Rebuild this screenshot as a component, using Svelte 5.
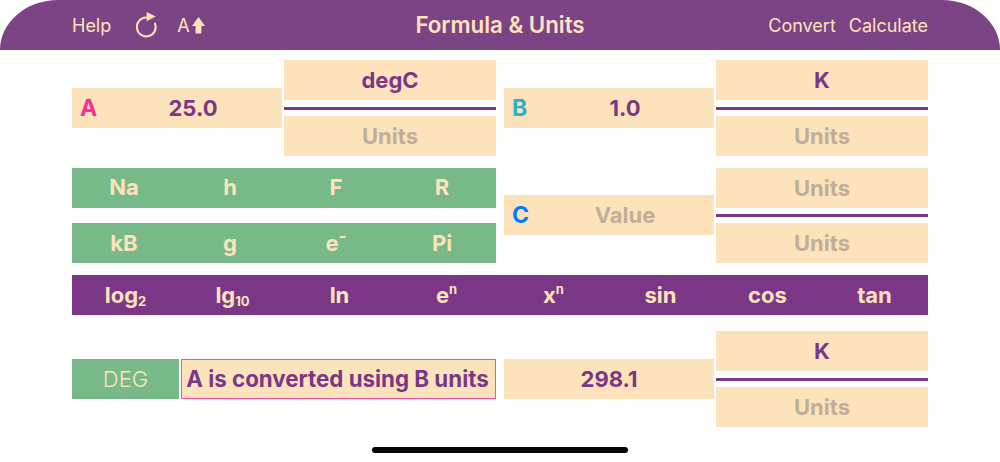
<script>
  const constants = [
    [{ label: "Na" }, { label: "h" }, { label: "F" }, { label: "R" }],
    [{ label: "kB" }, { label: "g" }, { label: "e", sup: "-", minus: true }, { label: "Pi" }],
  ];

  const functions = [
    { label: "log", sub: "2" },
    { label: "lg", sub: "10" },
    { label: "ln" },
    { label: "e", sup: "n" },
    { label: "x", sup: "n" },
    { label: "sin" },
    { label: "cos" },
    { label: "tan" },
  ];
</script>

{#snippet units(top, bottom)}
  <div class="units">
    <div class="cell" class:empty={!top}>{top || "Units"}</div>
    <div class="rule"></div>
    <div class="cell" class:empty={!bottom}>{bottom || "Units"}</div>
  </div>
{/snippet}

{#snippet key(item)}
  <span class="key">
    {item.label}{#if item.sub}<sub>{item.sub}</sub>{/if}{#if item.sup}<sup class:minus={item.minus}>{item.sup}</sup>{/if}
  </span>
{/snippet}

<div class="screen">
  <header class="nav">
    <div class="nav-left">
      <span>Help</span>
      <svg class="redo" width="24" height="28" viewBox="0 0 24 28" aria-hidden="true">
        <path d="M12 6.6 A9.4 9.4 0 1 0 21 12.5" fill="none" stroke="currentColor" stroke-width="2" stroke-linecap="round" />
        <path d="M12.6 1 L21.6 5.6 L12.6 10.2 Z" fill="currentColor" />
      </svg>
      <span class="font-up">
        A
        <svg width="13" height="17" viewBox="0 0 13 17" aria-hidden="true">
          <path d="M6.5 0 L13 9 H9.4 V16.5 H3.6 V9 H0 Z" fill="currentColor" />
        </svg>
      </span>
    </div>
    <h1>Formula &amp; Units</h1>
    <div class="nav-right">
      <span>Convert</span>
      <span>Calculate</span>
    </div>
  </header>

  <main class="content">
    <section class="pair">
      <div class="fraction">
        <div class="value tagged"><span class="tag a">A</span>25.0</div>
        {@render units("degC", "")}
      </div>
      <div class="fraction">
        <div class="value tagged"><span class="tag b">B</span>1.0</div>
        {@render units("K", "")}
      </div>
    </section>

    <section class="pair tight">
      <div class="constants">
        {#each constants as row}
          <div class="keys">
            {#each row as item}
              {@render key(item)}
            {/each}
          </div>
        {/each}
      </div>
      <div class="fraction">
        <div class="value tagged empty"><span class="tag c">C</span>Value</div>
        {@render units("", "")}
      </div>
    </section>

    <section class="functions">
      {#each functions as item}
        {@render key(item)}
      {/each}
    </section>

    <section class="pair result">
      <div class="mode">
        <div class="deg">DEG</div>
        <div class="message">A is converted using B units</div>
      </div>
      <div class="fraction">
        <div class="value">298.1</div>
        {@render units("K", "")}
      </div>
    </section>
  </main>

  <div class="home-bar"></div>
</div>

<style>
  :global(body) {
    background: #fff;
  }

  .screen {
    position: relative;
    width: 1000px;
    height: 462px;
    overflow: hidden;
    font-family: Inter, "Liberation Sans", sans-serif;
    color: #793785;
  }

  .nav {
    height: 50px;
    box-sizing: border-box;
    padding: 0 72px;
    display: grid;
    grid-template-columns: 1fr auto 1fr;
    align-items: center;
    background: #7d4485;
    color: #fde3bc;
    border-radius: 58px 58px 0 0 / 50px 50px 0 0;
    font-size: 18px;
  }

  .nav h1 {
    margin: -2px 0 0;
    font-size: 22.3px;
    font-weight: 600;
  }

  .nav-left {
    display: flex;
    align-items: center;
  }

  .redo {
    margin-left: 23px;
  }

  .font-up {
    margin-left: 19px;
    display: flex;
    align-items: center;
    gap: 2px;
    font-size: 18px;
  }

  .nav-right {
    display: flex;
    justify-content: flex-end;
    gap: 13px;
  }

  .content {
    padding: 10px 72px 0;
    display: flex;
    flex-direction: column;
    gap: 12px;
    font-size: 22px;
    font-weight: 700;
  }

  .pair {
    display: grid;
    grid-template-columns: 424px 424px;
    gap: 8px;
    height: 96px;
  }

  .tight {
    height: 95px;
  }

  .tight .value {
    margin-bottom: 1px;
  }

  .result {
    margin-top: 4px;
  }

  .fraction {
    display: grid;
    grid-template-columns: 210px 212px;
    gap: 2px;
    align-items: center;
    height: 100%;
  }

  .value {
    position: relative;
    height: 40px;
    display: flex;
    align-items: center;
    justify-content: center;
    background: #fde3bc;
  }

  .tagged {
    padding-left: 32px;
  }

  .tag {
    position: absolute;
    left: 8px;
    font-size: 23px;
  }

  .tag.a {
    color: #ff2d92;
  }

  .tag.b {
    color: #30b0c7;
  }

  .tag.c {
    color: #007aff;
  }

  .units {
    display: flex;
    flex-direction: column;
    justify-content: space-between;
    height: 100%;
  }

  .cell {
    height: 40px;
    line-height: 40px;
    text-align: center;
    background: #fde3bc;
  }

  .empty {
    color: #c0ae96;
  }

  .rule {
    height: 3px;
    background: #793785;
  }

  .constants {
    display: flex;
    flex-direction: column;
    gap: 15px;
  }

  .keys {
    display: grid;
    grid-template-columns: repeat(4, 1fr);
    height: 40px;
    background: #77b988;
    color: #fde3bc;
  }

  .keys .key {
    padding-right: 2px;
  }

  .keys:first-child .key {
    padding-bottom: 2px;
  }

  .key {
    display: flex;
    align-items: center;
    justify-content: center;
  }

  .key sub,
  .key sup {
    font-size: 13px;
    line-height: 1;
    position: relative;
    vertical-align: baseline;
  }

  .key sub {
    top: 6px;
  }

  .key sup {
    top: -6px;
  }

  .key sup.minus {
    font-size: 17px;
    top: -7px;
  }

  .functions {
    display: grid;
    grid-template-columns: repeat(8, 1fr);
    height: 40px;
    background: #793785;
    color: #fde3bc;
  }

  .mode {
    display: grid;
    grid-template-columns: 107px 315px;
    gap: 2px;
    align-items: center;
  }

  .deg {
    height: 40px;
    line-height: 40px;
    text-align: center;
    background: #77b988;
    color: #fde3bc;
    font-weight: 300;
  }

  .message {
    height: 40px;
    line-height: 38px;
    box-sizing: border-box;
    border: 1px solid #ff4d9e;
    padding-right: 2px;
    text-align: center;
    white-space: nowrap;
    background: #fde3bc;
    font-size: 22.3px;
  }

  .home-bar {
    position: absolute;
    left: 372px;
    bottom: 9px;
    width: 256px;
    height: 6px;
    border-radius: 3px;
    background: #000;
  }
</style>
